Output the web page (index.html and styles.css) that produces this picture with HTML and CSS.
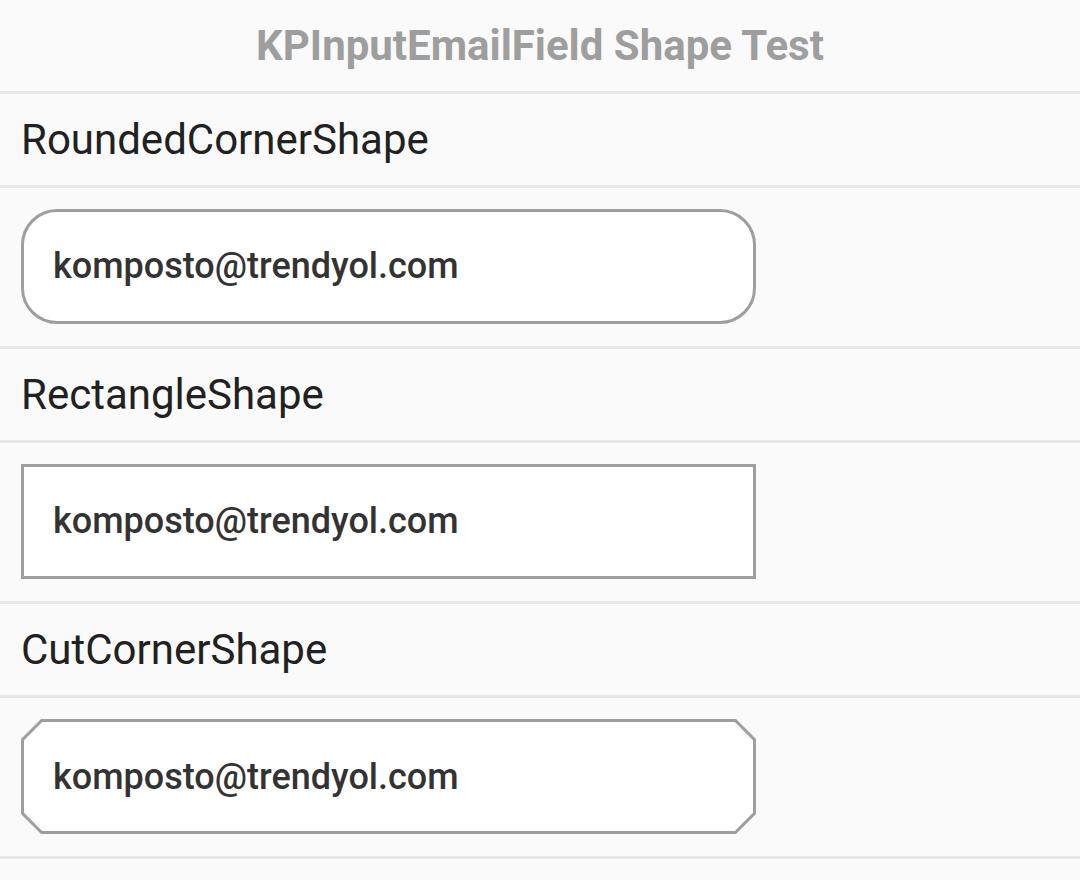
FILE: index.html
```html
<!DOCTYPE html>
<html>
<head>
<meta charset="utf-8">
<link rel="stylesheet" href="styles.css">
</head>
<body>
<div class="screen">
  <div class="title-bar">KPInputEmailField Shape Test</div>
  <div class="label-row">RoundedCornerShape</div>
  <div class="field-row">
    <div class="field field-rounded"><span class="value">komposto@trendyol.com</span></div>
  </div>
  <div class="label-row">RectangleShape</div>
  <div class="field-row">
    <div class="field field-rect"><span class="value">komposto@trendyol.com</span></div>
  </div>
  <div class="label-row">CutCornerShape</div>
  <div class="field-row">
    <div class="cut-outer"><div class="field field-cut"><span class="value">komposto@trendyol.com</span></div></div>
  </div>
</div>
</body>
</html>
```
FILE: styles.css
```css
html, body {
  margin: 0;
  padding: 0;
  background: #fafafa;
}
.screen {
  width: 1080px;
  height: 880px;
  overflow: hidden;
  font-family: Roboto, "Noto Sans", sans-serif;
  background: #fafafa;
}
.title-bar {
  height: 91px;
  border-bottom: 3px solid #e6e6e6;
  display: flex;
  align-items: center;
  justify-content: center;
  font-size: 42px;
  font-weight: 700;
  color: #9e9e9e;
}
.label-row {
  height: 91px;
  border-bottom: 3px solid #e6e6e6;
  display: flex;
  align-items: center;
  padding-left: 21px;
  font-size: 42px;
  color: #212121;
}
.field-row {
  height: 161px;
  box-sizing: border-box;
  border-bottom: 3px solid #e6e6e6;
  padding: 21px 0 0 21px;
}
.field {
  width: 735px;
  height: 115px;
  box-sizing: border-box;
  background: #ffffff;
  display: flex;
  align-items: center;
  padding-left: 29px;
  padding-bottom: 1px;
}
.value {
  font-size: 36px;
  font-weight: 500;
  color: #333333;
}
.field-rounded {
  border: 3px solid #9e9e9e;
  border-radius: 36px;
}
.field-rect {
  border: 3px solid #9e9e9e;
}
.cut-outer {
  width: 735px;
  height: 115px;
  box-sizing: border-box;
  padding: 3px;
  background: #9e9e9e;
  clip-path: polygon(20px 0, calc(100% - 20px) 0, 100% 20px, 100% calc(100% - 20px), calc(100% - 20px) 100%, 20px 100%, 0 calc(100% - 20px), 0 20px);
}
.field-cut {
  width: 729px;
  height: 109px;
  padding-left: 29px;
  padding-bottom: 0;
  padding-top: 1px;
  clip-path: polygon(18.2px 0, calc(100% - 18.2px) 0, 100% 18.2px, 100% calc(100% - 18.2px), calc(100% - 18.2px) 100%, 18.2px 100%, 0 calc(100% - 18.2px), 0 18.2px);
}
```
